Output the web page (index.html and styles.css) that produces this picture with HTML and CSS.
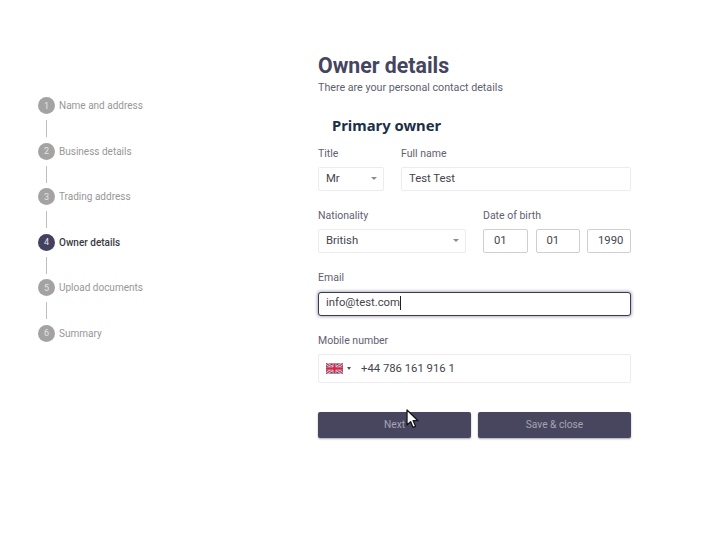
FILE: index.html
```html
<!DOCTYPE html>
<html lang="en">
<head>
<meta charset="utf-8">
<title>Owner details</title>
<link rel="stylesheet" href="styles.css">
</head>
<body>
<div class="page">
  <nav class="steps">
    <div class="step"><span class="num">1</span><span class="name">Name and address</span></div>
    <div class="line"></div>
    <div class="step"><span class="num">2</span><span class="name">Business details</span></div>
    <div class="line"></div>
    <div class="step"><span class="num">3</span><span class="name">Trading address</span></div>
    <div class="line"></div>
    <div class="step active"><span class="num">4</span><span class="name">Owner details</span></div>
    <div class="line"></div>
    <div class="step"><span class="num">5</span><span class="name">Upload documents</span></div>
    <div class="line"></div>
    <div class="step"><span class="num">6</span><span class="name">Summary</span></div>
  </nav>
  <main class="form">
    <h1>Owner details</h1>
    <p class="sub">There are your personal contact details</p>
    <h2>Primary owner</h2>
    <div class="row r1">
      <div class="field title"><label>Title</label><div class="box sel">Mr<i class="caret"></i></div></div>
      <div class="field grow"><label>Full name</label><div class="box">Test Test</div></div>
    </div>
    <div class="row r2">
      <div class="field nat"><label>Nationality</label><div class="box sel">British<i class="caret"></i></div></div>
      <div class="field grow"><label>Date of birth</label>
        <div class="dob">
          <div class="box dark">01</div><div class="box dark">01</div><div class="box dark">1990</div>
        </div>
      </div>
    </div>
    <div class="row r3">
      <div class="field grow"><label>Email</label><div class="box focus">info@test.com<span class="text-caret"></span></div></div>
    </div>
    <div class="row r4">
      <div class="field grow"><label>Mobile number</label>
        <div class="box phone">
          <svg class="flag" width="17" height="11" viewBox="0 0 60 36" aria-hidden="true">
            <rect width="60" height="36" fill="#3b3f82"/>
            <path d="M0 0L60 36M60 0L0 36" stroke="#f3e6ea" stroke-width="10"/>
            <path d="M0 0L60 36M60 0L0 36" stroke="#d0405a" stroke-width="5"/>
            <path d="M30 0V36M0 18H60" stroke="#f3e6ea" stroke-width="13"/>
            <path d="M30 0V36M0 18H60" stroke="#cf2a48" stroke-width="8"/>
          </svg>
          <i class="caret small"></i>
          <span class="tel">+44 786 161 916 1</span>
        </div>
      </div>
    </div>
    <div class="buttons">
      <button class="btn next">Next</button>
      <button class="btn">Save &amp; close</button>
    </div>
  </main>
</div>
<svg class="cursor" width="13" height="20" viewBox="0 0 13 20" aria-hidden="true">
  <path d="M1 1V16L4.6 12.6L7 18.4L9.6 17.3L7.2 11.7H12Z" fill="#fff" stroke="#15151c" stroke-width="1.3" stroke-linejoin="round"/>
</svg>
</body>
</html>
```
FILE: styles.css
```css
html, body { margin: 0; padding: 0; background: #fff; }
body { width: 710px; height: 536px; overflow: hidden; font-family: Roboto, "Liberation Sans", sans-serif; position: relative; }
.page { display: flex; padding-top: 53px; }
.steps { width: 318px; padding: 44px 0 0 38px; box-sizing: border-box; flex: none; }
.step { display: flex; align-items: center; height: 17px; gap: 4px; }
.num { width: 17px; height: 17px; border-radius: 50%; background: #a3a3a3; color: #e4e4e4; font-size: 9px; display: flex; align-items: center; justify-content: center; flex: none; }
.name { font-size: 10px; color: #979797; }
.active .num { background: #43415f; }
.active .name { color: #3a3a44; font-weight: 500; }
.line { width: 1px; height: 17px; background: #bdbdbd; margin: 6px 0 5.6px 8px; }
.form { width: 313px; flex: none; }
h1 { margin: 0; font-size: 21.3px; line-height: 26px; font-weight: 700; color: #45455f; }
.sub { margin: 2px 0 0; font-size: 10.7px; line-height: 14px; color: #5f6072; }
h2 { margin: 20px 0 0 14px; font-size: 14.8px; line-height: 20px; font-weight: 700; color: #1b2f48; font-family: "Noto Sans", Roboto, sans-serif; }
.row { display: flex; gap: 17px; }
.r1 { margin-top: 12px; }
.r2, .r3, .r4 { margin-top: 18px; }
.field { display: flex; flex-direction: column; }
.grow { flex: 1; min-width: 0; }
.title { width: 66px; }
.nat { width: 148px; }
label { font-size: 10.5px; line-height: 14px; height: 14px; margin-bottom: 6px; color: #5f6072; }
.box { height: 24px; box-sizing: border-box; border: 1px solid #ececf0; border-radius: 2px; background: #fff; display: flex; align-items: center; padding: 0 7px 1px; font-size: 11.3px; color: #44444c; position: relative; }
.sel { justify-content: space-between; }
.caret { width: 0; height: 0; border-left: 3.5px solid transparent; border-right: 3.5px solid transparent; border-top: 3.5px solid #8b8b92; margin-right: -1px; }
.caret.small { border-left-width: 2px; border-right-width: 2px; border-top-width: 3px; border-top-color: #555; margin: 0 0 0 4px; }
.dob { display: grid; grid-template-columns: 45fr 44fr 44fr; gap: 7.5px; }
.dark { border-color: #cfcfd3; padding: 0 0 1px 10px; }
.focus { margin-top: 1px; padding-bottom: 3px; border: 1px solid #3a3a50; box-shadow: 0 0 3px 1px rgba(67,65,95,.4); border-radius: 3px; }
.text-caret { width: 1px; height: 14px; background: #222; }
.phone { height: 29px; }
.flag { flex: none; }
.tel { margin-left: 10px; }
.buttons { display: flex; gap: 7px; margin-top: 29px; }
.btn { flex: 1; height: 26px; padding: 0 0 1px; border: 0; border-radius: 2px; background: #48465f; color: #a5a4b4; font-family: inherit; font-size: 10.2px; box-shadow: 0 1px 2px rgba(0,0,0,.35); }
.cursor { position: absolute; left: 406px; top: 409px; }
```
